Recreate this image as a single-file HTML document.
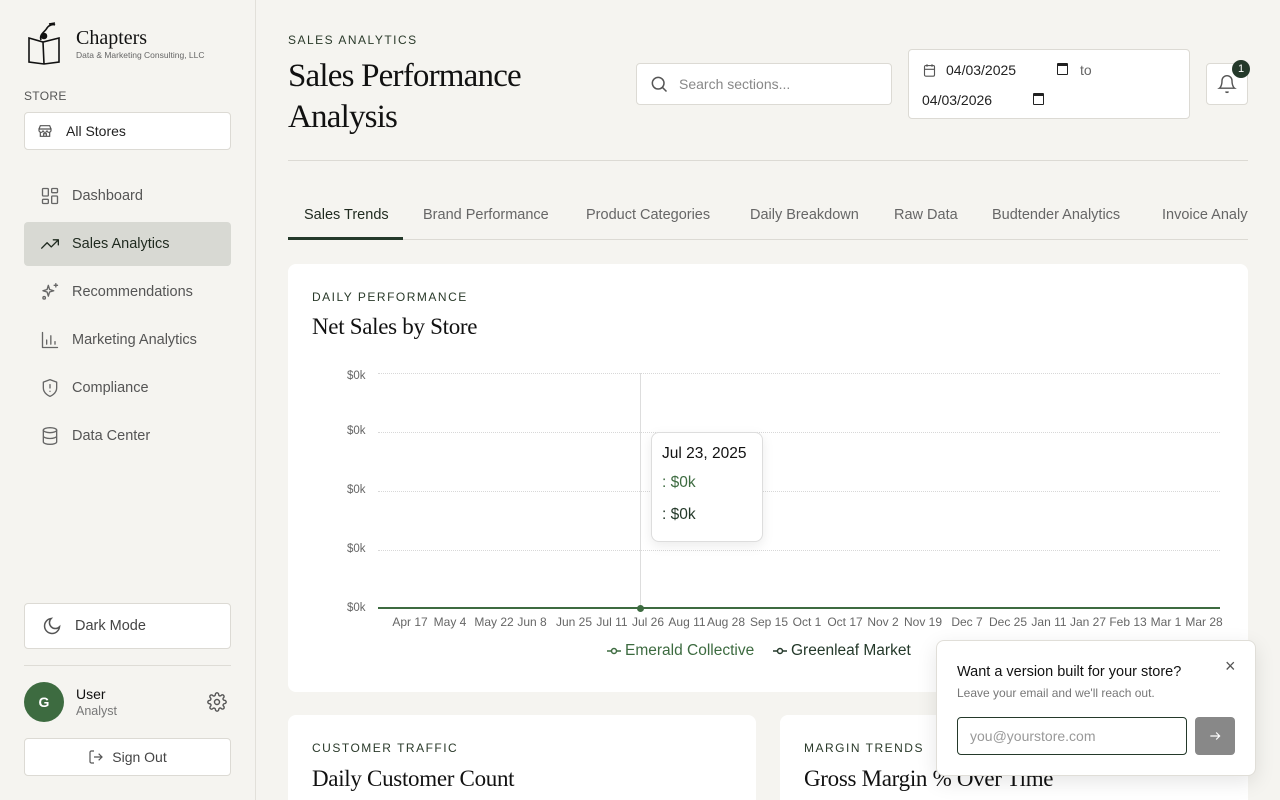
<!DOCTYPE html>
<html style="width:1280px;height:800px;overflow:hidden"><head><meta charset="utf-8"><style>
*{box-sizing:border-box;margin:0;padding:0}
body{width:1280px;height:800px;overflow:hidden;background:#f5f4f0;font-family:"Liberation Sans",sans-serif;color:#222;position:relative}
.sb{position:absolute;left:0;top:0;width:256px;height:800px;border-right:1px solid #e2e0da;background:#f5f4f0}
.serif{font-family:"Liberation Serif",serif}
.box{background:#fff;border:1px solid #dcdad4;border-radius:4px}
.nav{position:absolute;left:24px;width:207px;height:44px;display:flex;align-items:center;padding-left:16px;font-size:14.5px;color:#555;gap:12px}
.nav svg{width:20px;height:20px;fill:none;stroke:#666;stroke-width:1.6;stroke-linecap:round;stroke-linejoin:round}
.abs{position:absolute}
.tab{position:absolute;top:207px;font-size:14.5px;color:#666}
.yl{position:absolute;left:347px;font-size:11.5px;color:#666}
.xl{position:absolute;top:615px;font-size:12px;color:#666;transform:translateX(-50%);white-space:nowrap}
.grid{position:absolute;left:378px;width:842px;border-top:1px dotted #d8d8d8}
</style></head><body>
<div class="sb">
 <svg class="abs" style="left:27px;top:22px" width="34" height="44" viewBox="0 0 34 44" fill="none" stroke="#111" stroke-width="1.6"><path d="M2 16 L16 20 L32 16 L32 40 L17 42 L2 40 Z M16 20 L17 42"/><path d="M14 18 C12 12 18 10 20 6 C22 3 26 2 28 3" /><circle cx="17" cy="14" r="2.5" fill="#111"/><path d="M22 2 l6 -1"/></svg>
 <div class="abs serif" style="left:76px;top:27px;font-size:20px;color:#111">Chapters</div>
 <div class="abs" style="left:76px;top:50px;font-size:8.5px;color:#666">Data &amp; Marketing Consulting, LLC</div>
 <div class="abs" style="left:24px;top:89px;font-size:12px;color:#555;letter-spacing:.3px">STORE</div>
 <div class="abs box" style="left:24px;top:112px;width:207px;height:38px;display:flex;align-items:center;padding-left:12px;gap:13px;font-size:14px;color:#222">
  <svg width="16" height="16" viewBox="0 0 24 24" fill="none" stroke="#555" stroke-width="1.8"><path d="M3 9l2-5h14l2 5M3 9h18v2a3 3 0 0 1-6 0 3 3 0 0 1-6 0 3 3 0 0 1-6 0zM5 13v7h14v-7M10 20v-4h4v4"/></svg>All Stores</div>
 <div class="nav" style="top:174px"><svg viewBox="0 0 24 24"><rect x="3" y="3" width="7" height="9" rx="1"/><rect x="14" y="3" width="7" height="5" rx="1"/><rect x="14" y="12" width="7" height="9" rx="1"/><rect x="3" y="16" width="7" height="5" rx="1"/></svg>Dashboard</div>
 <div class="nav" style="top:222px;background:#d8d9d3;border-radius:4px;color:#1f2a1f"><svg viewBox="0 0 24 24" style="stroke:#1f2a1f"><path d="M22 7l-8.5 8.5-5-5L2 17M16 7h6v6"/></svg>Sales Analytics</div>
 <div class="nav" style="top:270px"><svg viewBox="0 0 24 24"><path d="M10 4l1.5 5 5 1.5-5 1.5L10 17l-1.5-5-5-1.5 5-1.5z"/><path d="M19 2v4M17 4h4"/><circle cx="5" cy="19" r="1.5"/></svg>Recommendations</div>
 <div class="nav" style="top:318px"><svg viewBox="0 0 24 24"><path d="M3 3v18h18M8 17v-5M13 17V7M18 17v-3"/></svg>Marketing Analytics</div>
 <div class="nav" style="top:366px"><svg viewBox="0 0 24 24"><path d="M12 22s8-3 8-10V5l-8-3-8 3v7c0 7 8 10 8 10zM12 8v4M12 16h.01"/></svg>Compliance</div>
 <div class="nav" style="top:414px"><svg viewBox="0 0 24 24"><ellipse cx="12" cy="5" rx="8" ry="3"/><path d="M4 5v14c0 1.7 3.6 3 8 3s8-1.3 8-3V5M4 12c0 1.7 3.6 3 8 3s8-1.3 8-3"/></svg>Data Center</div>
 <div class="abs box" style="left:24px;top:603px;width:207px;height:46px;display:flex;align-items:center;padding-left:17px;gap:13px;font-size:14.5px;color:#444">
  <svg width="20" height="20" viewBox="0 0 24 24" fill="none" stroke="#555" stroke-width="1.8"><path d="M21 13A9 9 0 1 1 11 3a7 7 0 0 0 10 10z"/></svg>Dark Mode</div>
 <div class="abs" style="left:24px;top:665px;width:207px;border-top:1px solid #dedcd6"></div>
 <div class="abs" style="left:24px;top:682px;width:40px;height:40px;border-radius:50%;background:#3d6b40;color:#fff;font-size:14px;font-weight:bold;display:flex;align-items:center;justify-content:center">G</div>
 <div class="abs" style="left:76px;top:686px;font-size:14px;color:#111">User</div>
 <div class="abs" style="left:76px;top:704px;font-size:12.5px;color:#777">Analyst</div>
 <svg class="abs" style="left:207px;top:692px" width="20" height="20" viewBox="0 0 24 24" fill="none" stroke="#555" stroke-width="1.7"><circle cx="12" cy="12" r="3"/><path d="M19.4 15a1.7 1.7 0 0 0 .3 1.8l.1.1a2 2 0 1 1-2.8 2.8l-.1-.1a1.7 1.7 0 0 0-1.8-.3 1.7 1.7 0 0 0-1 1.5V21a2 2 0 1 1-4 0v-.1a1.7 1.7 0 0 0-1.1-1.5 1.7 1.7 0 0 0-1.800.3l-.1.1a2 2 0 1 1-2.8-2.8l.1-.1a1.7 1.7 0 0 0 .3-1.8 1.7 1.7 0 0 0-1.5-1H3a2 2 0 1 1 0-4h.1a1.7 1.7 0 0 0 1.5-1.1 1.7 1.7 0 0 0-.3-1.8l-.1-.1a2 2 0 1 1 2.8-2.8l.1.1a1.7 1.7 0 0 0 1.8.3H9a1.7 1.7 0 0 0 1-1.5V3a2 2 0 1 1 4 0v.1a1.7 1.7 0 0 0 1 1.5 1.7 1.7 0 0 0 1.8-.3l.1-.1a2 2 0 1 1 2.8 2.8l-.1.1a1.7 1.7 0 0 0-.3 1.8V9a1.7 1.7 0 0 0 1.5 1H21a2 2 0 1 1 0 4h-.1a1.7 1.7 0 0 0-1.5 1z"/></svg>
 <div class="abs box" style="left:24px;top:738px;width:207px;height:38px;display:flex;align-items:center;justify-content:center;gap:8px;font-size:14px;color:#444">
  <svg width="16" height="16" viewBox="0 0 24 24" fill="none" stroke="#555" stroke-width="1.8"><path d="M9 21H5a2 2 0 0 1-2-2V5a2 2 0 0 1 2-2h4M16 17l5-5-5-5M21 12H9"/></svg>Sign Out</div>
</div>

<div class="abs" style="left:288px;top:33px;font-size:12px;letter-spacing:1.5px;color:#2a3a2a">SALES ANALYTICS</div>
<div class="abs serif" style="left:288px;top:56px;font-size:33px;line-height:41px;color:#111;letter-spacing:-.8px">Sales Performance<br>Analysis</div>
<div class="abs box" style="left:636px;top:63px;width:256px;height:42px;display:flex;align-items:center;padding-left:12px;gap:10px;font-size:14px;color:#888">
 <svg width="20" height="20" viewBox="0 0 24 24" fill="none" stroke="#555" stroke-width="1.8"><circle cx="11" cy="11" r="7"/><path d="M21 21l-5-5"/></svg>Search sections...</div>
<div class="abs box" style="left:908px;top:49px;width:282px;height:70px;font-size:14px;color:#222">
 <svg class="abs" style="left:13px;top:13px" width="15" height="15" viewBox="0 0 24 24" fill="none" stroke="#555" stroke-width="1.8"><rect x="4" y="4" width="16" height="17" rx="2"/><path d="M4 10h16M8 2v4M16 2v4"/></svg>
 <span class="abs" style="left:37px;top:12px">04/03/2025</span>
 <span class="abs" style="left:148px;top:13px;width:11px;height:12px;border:1.5px solid #222;border-top-width:3px;border-radius:1px"></span>
 <span class="abs" style="left:171px;top:12px;color:#666">to</span>
 <span class="abs" style="left:13px;top:42px">04/03/2026</span>
 <span class="abs" style="left:124px;top:43px;width:11px;height:12px;border:1.5px solid #222;border-top-width:3px;border-radius:1px"></span>
</div>
<div class="abs box" style="left:1206px;top:63px;width:42px;height:42px;display:flex;align-items:center;justify-content:center">
 <svg width="20" height="20" viewBox="0 0 24 24" fill="none" stroke="#555" stroke-width="1.7"><path d="M6 8a6 6 0 0 1 12 0c0 7 3 9 3 9H3s3-2 3-9M10.3 21a1.9 1.9 0 0 0 3.4 0"/></svg></div>
<div class="abs" style="left:1232px;top:60px;width:18px;height:18px;border-radius:50%;background:#24392a;color:#fff;font-size:11px;display:flex;align-items:center;justify-content:center">1</div>
<div class="abs" style="left:288px;top:160px;width:960px;border-top:1px solid #dcdad4"></div>

<div class="tab" style="left:304px;color:#1f2a1f">Sales Trends</div>
<div class="tab" style="left:423px">Brand Performance</div>
<div class="tab" style="left:586px">Product Categories</div>
<div class="tab" style="left:750px">Daily Breakdown</div>
<div class="tab" style="left:894px">Raw Data</div>
<div class="tab" style="left:992px">Budtender Analytics</div>
<div class="tab" style="left:1162px;width:86px;overflow:hidden;white-space:nowrap">Invoice Analytics</div>
<div class="abs" style="left:288px;top:239px;width:960px;border-top:1px solid #dcdad4"></div>
<div class="abs" style="left:288px;top:237px;width:115px;height:3px;background:#24392a"></div>

<div class="abs" style="left:288px;top:264px;width:960px;height:428px;background:#fff;border-radius:8px"></div>
<div class="abs" style="left:312px;top:290px;font-size:12px;letter-spacing:1.5px;color:#2a3a2a">DAILY PERFORMANCE</div>
<div class="abs serif" style="left:312px;top:314px;font-size:23px;color:#111;letter-spacing:-.3px">Net Sales by Store</div>
<div class="grid" style="top:373px"></div><div class="grid" style="top:432px"></div><div class="grid" style="top:491px"></div><div class="grid" style="top:550px"></div>
<div class="yl" style="top:370px">$0k</div><div class="yl" style="top:425px">$0k</div><div class="yl" style="top:484px">$0k</div><div class="yl" style="top:543px">$0k</div><div class="yl" style="top:602px">$0k</div>
<div class="abs" style="left:640px;top:373px;width:1px;height:236px;background:#ddd"></div>
<div class="abs" style="left:378px;top:607px;width:842px;height:2px;background:#3d6b40"></div>
<div class="abs" style="left:637px;top:605px;width:7px;height:7px;border-radius:50%;background:#3d6b40"></div>
<div class="xl" style="left:410px">Apr 17</div><div class="xl" style="left:450px">May 4</div><div class="xl" style="left:494px">May 22</div><div class="xl" style="left:532px">Jun 8</div><div class="xl" style="left:574px">Jun 25</div><div class="xl" style="left:612px">Jul 11</div><div class="xl" style="left:648px">Jul 26</div><div class="xl" style="left:687px">Aug 11</div><div class="xl" style="left:726px">Aug 28</div><div class="xl" style="left:769px">Sep 15</div><div class="xl" style="left:807px">Oct 1</div><div class="xl" style="left:845px">Oct 17</div><div class="xl" style="left:883px">Nov 2</div><div class="xl" style="left:923px">Nov 19</div><div class="xl" style="left:967px">Dec 7</div><div class="xl" style="left:1008px">Dec 25</div><div class="xl" style="left:1049px">Jan 11</div><div class="xl" style="left:1088px">Jan 27</div><div class="xl" style="left:1128px">Feb 13</div><div class="xl" style="left:1166px">Mar 1</div><div class="xl" style="left:1204px">Mar 28</div>
<div class="abs" style="left:607px;top:642px;font-size:15.5px;color:#3d6b40;display:flex;align-items:center;gap:4px"><svg width="14" height="8"><path d="M0 4h14" stroke="#3d6b40" stroke-width="1.5"/><circle cx="7" cy="4" r="2.5" fill="#fff" stroke="#3d6b40" stroke-width="1.5"/></svg>Emerald Collective</div>
<div class="abs" style="left:773px;top:642px;font-size:15.5px;color:#24392a;display:flex;align-items:center;gap:4px"><svg width="14" height="8"><path d="M0 4h14" stroke="#24392a" stroke-width="1.5"/><circle cx="7" cy="4" r="2.5" fill="#fff" stroke="#24392a" stroke-width="1.5"/></svg>Greenleaf Market</div>
<div class="abs" style="left:651px;top:432px;width:112px;height:110px;background:#fff;border:1px solid #ddd;border-radius:8px;box-shadow:0 4px 12px rgba(0,0,0,.08)">
 <div class="abs" style="left:10px;top:12px;font-size:15.5px;color:#111">Jul 23, 2025</div>
 <div class="abs" style="left:10px;top:41px;font-size:15.5px;color:#3d6b40">: $0k</div>
 <div class="abs" style="left:10px;top:73px;font-size:15.5px;color:#24392a">: $0k</div>
</div>

<div class="abs" style="left:288px;top:715px;width:468px;height:85px;background:#fff;border-radius:8px 8px 0 0"></div>
<div class="abs" style="left:780px;top:715px;width:468px;height:85px;background:#fff;border-radius:8px 8px 0 0"></div>
<div class="abs" style="left:312px;top:741px;font-size:12px;letter-spacing:1.5px;color:#2a3a2a">CUSTOMER TRAFFIC</div>
<div class="abs serif" style="left:312px;top:766px;font-size:23px;color:#111;letter-spacing:-.3px">Daily Customer Count</div>
<div class="abs" style="left:804px;top:741px;font-size:12px;letter-spacing:1.5px;color:#2a3a2a">MARGIN TRENDS</div>
<div class="abs serif" style="left:804px;top:766px;font-size:23px;color:#111;letter-spacing:-.3px">Gross Margin % Over Time</div>

<div class="abs" style="left:936px;top:640px;width:320px;height:136px;background:#fff;border:1px solid #e0ded8;border-radius:8px;box-shadow:0 6px 20px rgba(0,0,0,.1)">
 <div class="abs" style="left:20px;top:23px;font-size:14.5px;color:#111">Want a version built for your store?</div>
 <div class="abs" style="left:20px;top:45px;font-size:12px;color:#777">Leave your email and we'll reach out.</div>
 <div class="abs" style="left:288px;top:15px;font-size:18px;color:#555">×</div>
 <div class="abs" style="left:20px;top:76px;width:230px;height:38px;border:1.5px solid #24392a;border-radius:4px;padding:10px 12px;font-size:14px;color:#999">you@yourstore.com</div>
 <div class="abs" style="left:258px;top:76px;width:40px;height:38px;background:#888;border-radius:4px;display:flex;align-items:center;justify-content:center"><svg width="14" height="14" viewBox="0 0 24 24" fill="none" stroke="#fff" stroke-width="2"><path d="M4 12h16M14 6l6 6-6 6"/></svg></div>
</div>
</body></html>
